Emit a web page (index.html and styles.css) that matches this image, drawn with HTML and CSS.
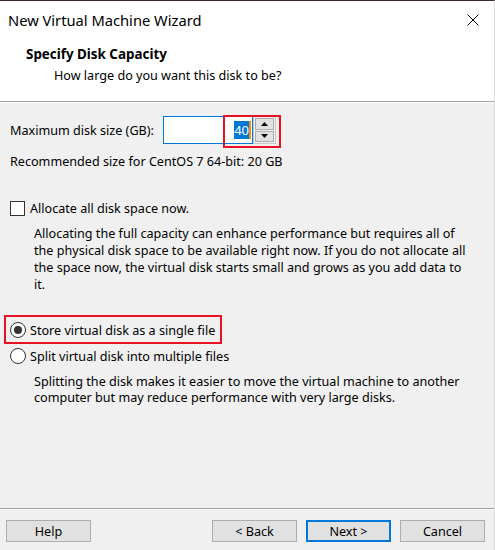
FILE: index.html
```html
<!DOCTYPE html>
<html>
<head>
<meta charset="utf-8">
<link rel="stylesheet" href="styles.css">
</head>
<body>
<div class="window">
  <div class="titlebar">
    <span class="title">New Virtual Machine Wizard</span>
    <svg class="close" width="12" height="12" viewBox="0 0 12 12"><path d="M0.5 0.5 L11.5 11.5 M11.5 0.5 L0.5 11.5" stroke="#000" stroke-width="1" fill="none"/></svg>
  </div>
  <div class="header">
    <div class="h-title">Specify Disk Capacity</div>
    <div class="h-sub">How large do you want this disk to be?</div>
  </div>
  <div class="content">
    <div class="size-row">
      <span class="size-label">Maximum disk size (GB):</span>
      <div class="spin">
        <div class="spin-input"><span class="sel">40</span><span class="caret"></span></div>
        <div class="spin-btns">
          <div class="spin-btn"><svg width="7" height="4" viewBox="0 0 7 4"><path d="M0 4 L3.5 0 L7 4 Z" fill="#000"/></svg></div>
          <div class="spin-btn"><svg width="7" height="4" viewBox="0 0 7 4"><path d="M0 0 L7 0 L3.5 4 Z" fill="#000"/></svg></div>
        </div>
        <div class="hl hl-spin"></div>
      </div>
    </div>
    <div class="rec">Recommended size for CentOS 7 64-bit: 20 GB</div>
    <div class="check-row">
      <span class="checkbox"></span>
      <span>Allocate all disk space now.</span>
    </div>
    <p class="desc">Allocating the full capacity can enhance performance but requires all of the physical disk space to be available right now. If you do not allocate all the space now, the virtual disk starts small and grows as you add data to<br>it.</p>
    <div class="radio-row radio-first">
      <span class="radio checked"></span>
      <span>Store virtual disk as a single file</span>
      <div class="hl hl-radio"></div>
    </div>
    <div class="radio-row">
      <span class="radio"></span>
      <span>Split virtual disk into multiple files</span>
    </div>
    <p class="desc desc2">Splitting the disk makes it easier to move the virtual machine to another computer but may reduce performance with very large disks.</p>
  </div>
  <div class="footer">
    <button class="btn">Help</button>
    <div class="spacer"></div>
    <button class="btn">&lt; Back</button>
    <button class="btn btn-default">Next &gt;</button>
    <button class="btn">Cancel</button>
  </div>
</div>
</body>
</html>
```
FILE: styles.css
```css
* { box-sizing: border-box; }
html, body { margin: 0; padding: 0; }
body {
  width: 495px;
  height: 550px;
  overflow: hidden;
  background: #f0f0f0;
  font-family: "Noto Sans", "Open Sans", sans-serif;
  font-size: 12.6px;
  color: #000;
}
.window {
  width: 495px;
  height: 550px;
  display: flex;
  flex-direction: column;
  border-top: 1px solid #3a2a2e;
  border-right: 1px solid #dcdcdc;
}
.titlebar {
  height: 37px;
  background: #fff;
  display: flex;
  align-items: center;
  justify-content: space-between;
  padding: 0 15px 0 8px;
}
.title {
  font-size: 14.7px;
  color: #000;
}
.close { display: block; }
.header {
  height: 64px;
  background: #fff;
  border-bottom: 1px solid #a0a0a0;
  padding: 8px 0 0 26px;
}
.h-title {
  font-weight: bold;
  font-size: 13.4px;
  line-height: 17px;
}
.h-sub {
  padding-left: 28px;
  margin-top: 4px;
  line-height: 17px;
}
.content {
  flex: 1;
  border-top: 1px solid #fff;
  padding: 13px 10px 0 10px;
  border-bottom: 1px solid #a0a0a0;
}
.size-row {
  display: flex;
  align-items: center;
  height: 28px;
}
.size-label { width: 153px; }
.spin {
  position: relative;
  display: flex;
  height: 28px;
}
.spin-input {
  width: 90px;
  height: 28px;
  background: #fff;
  border: 1px solid #0078d7;
  display: flex;
  align-items: center;
  justify-content: flex-end;
  padding-right: 1px;
  font-size: 13px;
}
.sel {
  background: #0078d7;
  color: #fff;
  line-height: 18px;
}
.caret {
  width: 2px;
  height: 18px;
  background: #ff8c00;
}
.spin-btns {
  width: 23px;
  height: 28px;
  border: 1px solid #c8c8c8;
  background: #f0f0f0;
  padding: 1px;
  display: flex;
  flex-direction: column;
  gap: 1px;
}
.spin-btn {
  flex: 1;
  background: #e1e1e1;
  border: 1px solid #adadad;
  display: flex;
  align-items: center;
  justify-content: center;
}
.spin-btn svg { display: block; }
.hl {
  position: absolute;
  border: 2px solid #e81123;
  pointer-events: none;
}
.hl-spin { left: 60px; top: -1px; width: 58px; height: 33px; }
.rec {
  margin-top: 10px;
  line-height: 16px;
}
.check-row {
  display: flex;
  align-items: center;
  gap: 5px;
  margin-top: 30px;
  height: 16px;
}
.checkbox {
  width: 15px;
  height: 15px;
  border: 1px solid #333;
  background: #fff;
}
.desc {
  margin: 9px 0 0 24px;
  line-height: 17px;
  width: 442px;
}
.radio-row {
  position: relative;
  display: flex;
  align-items: center;
  gap: 4px;
  height: 16px;
}
.radio-first { margin-top: 29px; margin-bottom: 10px; }
.radio {
  width: 16px;
  height: 16px;
  border-radius: 50%;
  border: 1px solid #333;
  background: #fff;
  display: flex;
  align-items: center;
  justify-content: center;
}
.radio.checked::after {
  content: "";
  width: 8px;
  height: 8px;
  border-radius: 50%;
  background: #333;
}
.hl-radio { left: -6px; top: -7px; width: 218px; height: 29px; }
.desc2 { margin-top: 10px; line-height: 16px; width: 450px; }
.footer {
  height: 41px;
  border-top: 1px solid #fff;
  display: flex;
  align-items: flex-start;
  padding: 10px 9px 0 6px;
  gap: 9px;
}
.spacer { flex: 1; }
.btn {
  width: 85px;
  height: 22px;
  background: #e1e1e1;
  border: 1px solid #adadad;
  font-family: inherit;
  font-size: 12.6px;
  color: #000;
  padding: 0;
  margin: 0;
}
.btn-default { border: 2px solid #0078d7; }
```
